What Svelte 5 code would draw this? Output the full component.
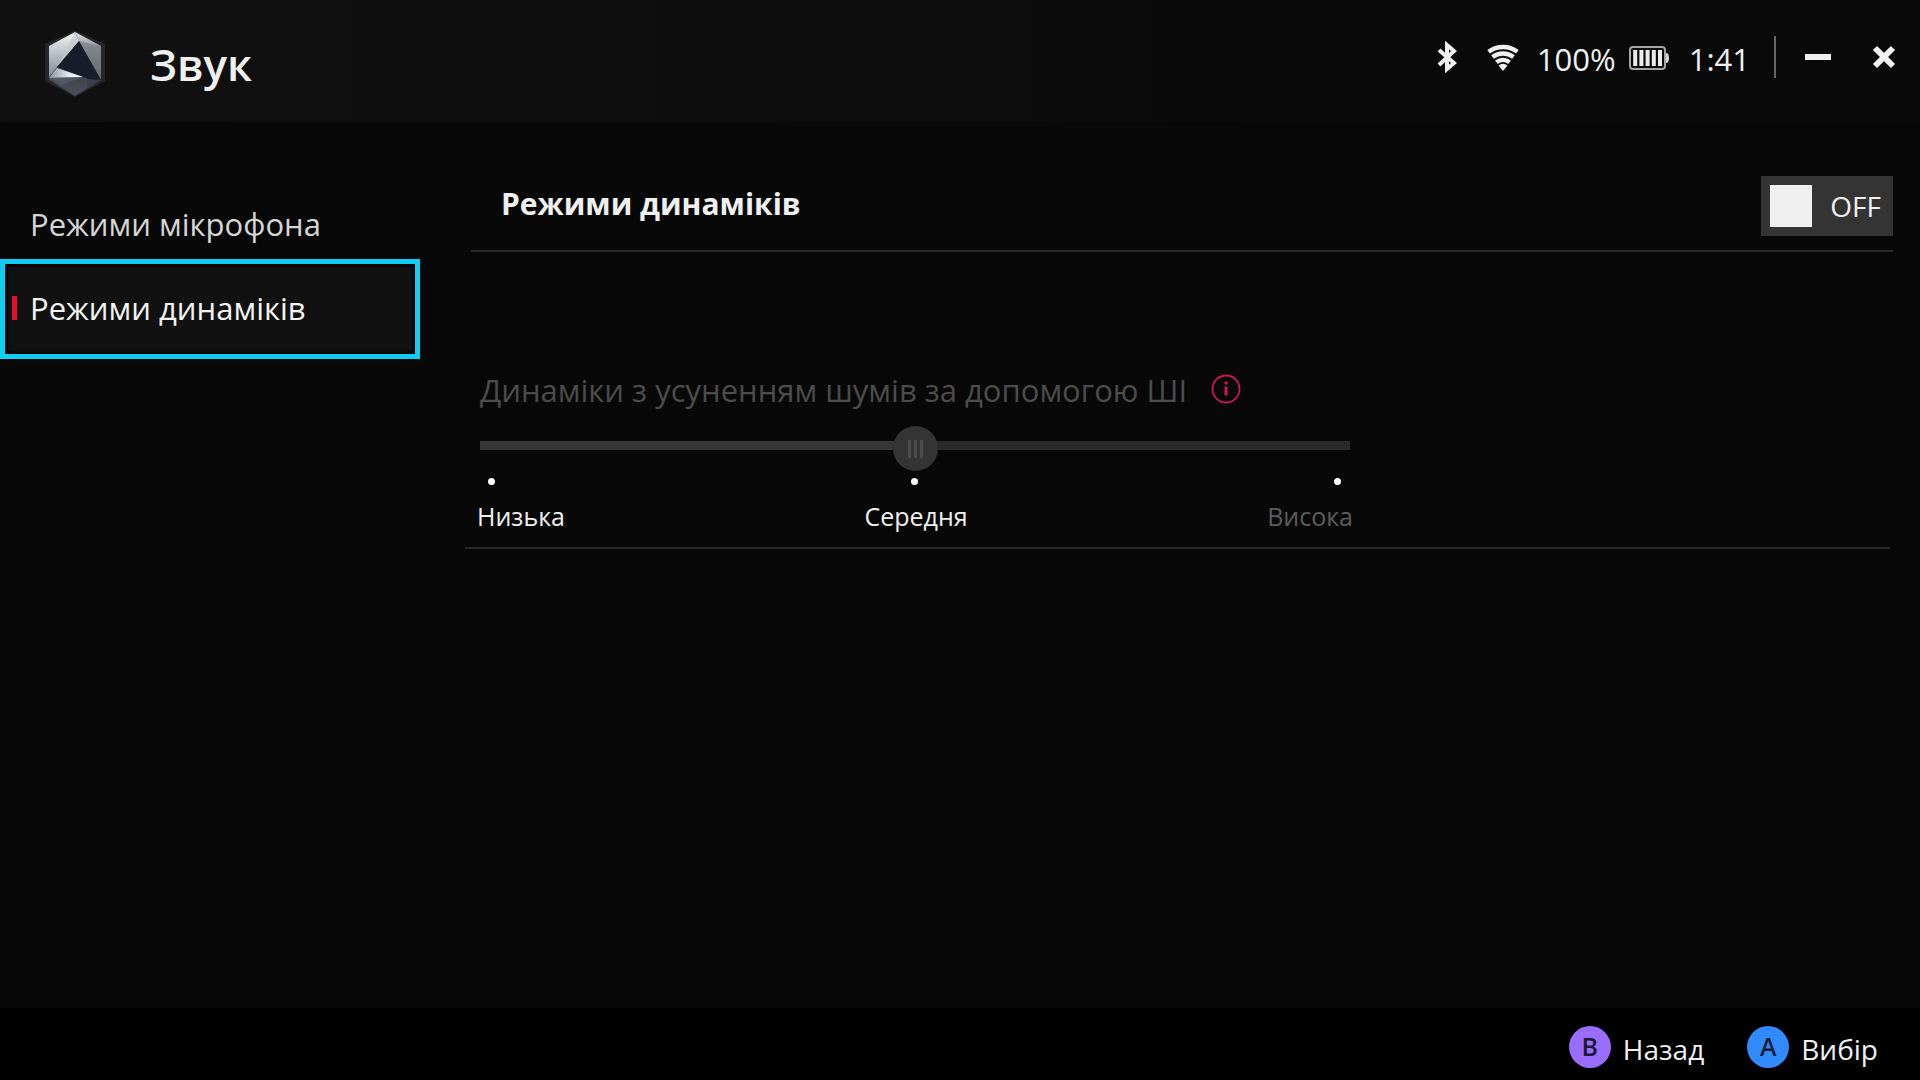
<script>
	let tabs = [
		{ id: 'mic', label: 'Режими мікрофона' },
		{ id: 'speaker', label: 'Режими динаміків' }
	];
	let levels = ['Низька', 'Середня', 'Висока'];

	let active = 'speaker';
	let enabled = false;
	let level = 1;
</script>

<div class="app">
	<header class="topbar">
		<svg class="logo" viewBox="0 0 64 68" aria-hidden="true">
			<defs>
				<linearGradient id="lg-left" x1="0" y1="0" x2="0" y2="1">
					<stop offset="0" stop-color="#f2f5f8" />
					<stop offset="0.5" stop-color="#b9bec6" />
					<stop offset="1" stop-color="#868b94" />
				</linearGradient>
				<linearGradient id="lg-right" x1="0" y1="0" x2="0" y2="1">
					<stop offset="0" stop-color="#e2e6ea" />
					<stop offset="0.3" stop-color="#9599a0" />
					<stop offset="1" stop-color="#5a5d64" />
				</linearGradient>
				<linearGradient id="lg-fold" x1="0" y1="0" x2="1" y2="0">
					<stop offset="0" stop-color="#8d929b" />
					<stop offset="0.6" stop-color="#e8ebef" />
					<stop offset="1" stop-color="#fff" />
				</linearGradient>
				<linearGradient id="lg-base" x1="0" y1="0" x2="0" y2="1">
					<stop offset="0" stop-color="#262c38" />
					<stop offset="1" stop-color="#4a4f59" />
				</linearGradient>
			</defs>
			<path d="M32 0 62 13V50L32 66 2 50V13Z" fill="#24262b" />
			<path d="M32 1 58 15V49L32 65 6 49V15Z" fill="url(#lg-base)" />
			<path d="M32 1 6 15V46L14 36 36 10Z" fill="url(#lg-left)" />
			<path d="M32 1 14 36 36 10Z" fill="#c3c7cd" opacity="0.6" />
			<path d="M32 1 58 15V49L36 10Z" fill="url(#lg-right)" />
			<path d="M36 10 58 15V49Z" fill="#6f737b" opacity="0.5" />
			<path d="M36 10 14 36 40 46 44 47V58L58 49Z" fill="#191d29" />
			<path d="M14 37 40 46 6 47Z" fill="url(#lg-fold)" />
			<path d="M6 47 40 46 18 54Z" fill="#5a606b" opacity="0.7" />
			<path d="M44 48 58 49 44 58Z" fill="#3c414b" />
		</svg>
		<h1>Звук</h1>

		<div class="status">
			<svg class="bluetooth" viewBox="0 0 20 32" aria-label="Bluetooth">
				<path d="M2 9 17 22 10 28V4L17 10 2 24" />
			</svg>
			<svg class="wifi" viewBox="0 0 32 27" aria-label="Wi-Fi">
				<path d="M1.6 7.8A24 24 0 0 1 30.4 7.8" />
				<path d="M5.5 13A17.5 17.5 0 0 1 26.5 13" />
				<path d="M9.4 18.2A11 11 0 0 1 22.6 18.2" />
				<path class="fill" d="M16 27 11.5 21.5A7 7 0 0 1 20.5 21.5Z" />
			</svg>
			<span class="percent">100%</span>
			<svg class="battery" viewBox="0 0 40 24" aria-hidden="true">
				<rect x="1" y="1" width="35" height="22" rx="3" fill="none" stroke="#a5a5a5" stroke-width="2" />
				<path d="M37 7Q40 7 40 12T37 17Z" fill="#d8d8d8" />
				<path d="M6.2 4V20M12.4 4V20M18.6 4V20M24.8 4V20M31 4V20" stroke="#ececec" stroke-width="4" />
			</svg>
			<span class="clock">1:41</span>
		</div>

		<div class="window-actions">
			<button type="button" aria-label="Згорнути">
				<svg viewBox="0 0 26 26"><path d="M0 13H26" /></svg>
			</button>
			<button type="button" aria-label="Закрити">
				<svg viewBox="0 0 26 26"><path d="M4 4 22 22M22 4 4 22" /></svg>
			</button>
		</div>
	</header>

	<div class="body">
		<nav>
			{#each tabs as tab (tab.id)}
				<button
					type="button"
					class="tab"
					class:active={active === tab.id}
					on:click={() => (active = tab.id)}
				>
					<span class="marker"></span>
					{tab.label}
				</button>
			{/each}
		</nav>

		<main>
			<div class="section-head">
				<h2>Режими динаміків</h2>
				<label class="toggle" class:on={enabled}>
					<input type="checkbox" bind:checked={enabled} aria-label="Режими динаміків" />
					<span>{enabled ? 'ON' : 'OFF'}</span>
				</label>
			</div>

			<section class="setting">
				<div class="setting-title">
					<label for="noise-level">Динаміки з усуненням шумів за допомогою ШІ</label>
					<svg viewBox="0 0 30 30" aria-hidden="true">
						<circle cx="15" cy="15" r="13.5" fill="none" stroke="#c8194f" stroke-width="1.8" />
						<circle cx="15" cy="9" r="1.7" fill="#c8194f" />
						<path d="M15 12.5V21.5" stroke="#c8194f" stroke-width="3" />
					</svg>
				</div>
				<div class="slider">
					<input id="noise-level" type="range" min="0" max="2" bind:value={level} disabled={!enabled} />
					<div class="dots">
						{#each levels as name (name)}
							<i></i>
						{/each}
					</div>
					<div class="levels">
						{#each levels as name, i (name)}
							<span class:dim={i > level}>{name}</span>
						{/each}
					</div>
				</div>
			</section>
		</main>
	</div>

	<footer>
		<button type="button" class="hint">
			<span class="key key-b">B</span>
			<span class="text">Назад</span>
		</button>
		<button type="button" class="hint">
			<span class="key key-a">A</span>
			<span class="text">Вибір</span>
		</button>
	</footer>
</div>

<style>
	:global(body) {
		background: #080808;
	}

	.app {
		display: flex;
		flex-direction: column;
		min-height: 100vh;
		background: #080808;
		color: #f0f0f0;
		font-family: 'Open Sans', 'Noto Sans', sans-serif;
		font-size: 31px;
		line-height: 44px;
	}

	button {
		padding: 0;
		border: none;
		background: none;
		color: inherit;
		font: inherit;
		cursor: pointer;
	}

	.topbar {
		display: flex;
		align-items: center;
		height: 122px;
		padding: 0 23px 0 43px;
		box-sizing: border-box;
		background: linear-gradient(90deg, #111 0%, #0f0f0f 25%, #090909 70%);
	}

	.logo {
		width: 64px;
		height: 68px;
		margin-top: 8px;
	}

	h1 {
		flex: 1;
		margin: 6px 0 0 43px;
		font-size: 44px;
		font-weight: 600;
		line-height: 60px;
	}

	.status {
		display: flex;
		align-items: center;
		padding: 0 24px 8px 0;
	}

	.status span {
		padding-top: 3px;
	}

	.bluetooth {
		width: 20px;
		height: 32px;
		margin-right: 30px;
		fill: none;
		stroke: #f0f0f0;
		stroke-width: 4;
	}

	.wifi {
		width: 32px;
		height: 27px;
		margin-right: 18px;
		fill: none;
		stroke: #f0f0f0;
		stroke-width: 4.5;
	}

	.wifi .fill {
		fill: #f0f0f0;
		stroke: none;
	}

	.battery {
		width: 40px;
		height: 24px;
		margin: 2px 20px 0 13px;
	}

	.window-actions {
		display: flex;
		align-items: center;
		gap: 40px;
		height: 42px;
		margin-bottom: 8px;
		padding-left: 29px;
		border-left: 2px solid #666;
	}

	.window-actions button {
		display: flex;
	}

	.window-actions svg {
		width: 26px;
		height: 26px;
		stroke: #f0f0f0;
		stroke-width: 6;
	}

	.body {
		display: flex;
		flex: 1;
	}

	nav {
		display: flex;
		flex-direction: column;
		width: 420px;
		flex-shrink: 0;
		padding-top: 68px;
	}

	.tab {
		display: flex;
		align-items: center;
		gap: 13px;
		height: 69px;
		padding: 0 12px 2px;
		color: #d6d6d6;
		text-align: left;
	}

	.tab.active {
		height: 100px;
		padding: 0 7px 2px;
		border: 5px solid #12cdf2;
		background: #111;
		box-shadow: inset 0 0 3px 2px #000;
		color: #f4f4f4;
	}

	.marker {
		width: 5px;
		height: 24px;
	}

	.active .marker {
		background: #e3122c;
	}

	main {
		flex: 1;
		padding: 54px 27px 0 45px;
	}

	.section-head {
		display: flex;
		align-items: flex-start;
		justify-content: space-between;
		height: 74px;
		margin-left: 6px;
		padding-left: 30px;
		border-bottom: 2px solid #292929;
	}

	h2 {
		margin: 6px 0 0;
		font-size: 30px;
		font-weight: 700;
		line-height: 44px;
	}

	.toggle {
		display: flex;
		align-items: center;
		justify-content: space-between;
		width: 132px;
		height: 60px;
		padding: 0 12px 0 9px;
		box-sizing: border-box;
		background: #343434;
		font-size: 28px;
		cursor: pointer;
	}

	.toggle input {
		appearance: none;
		width: 42px;
		height: 42px;
		margin: 0;
		background: #f0f0f0;
	}

	.toggle.on {
		flex-direction: row-reverse;
		background: #c8102e;
	}

	.setting {
		margin-right: 3px;
		padding: 116px 0 9px 15px;
		border-bottom: 2px solid #292929;
	}

	.setting-title {
		display: flex;
		align-items: center;
		gap: 24px;
		color: #4c4c4c;
	}

	.setting-title svg {
		width: 30px;
		height: 30px;
		margin-bottom: 3px;
	}

	.slider {
		width: 870px;
		max-width: 100%;
		padding-top: 14px;
	}

	.slider input {
		display: block;
		appearance: none;
		width: 100%;
		height: 45px;
		margin: 0;
		background: linear-gradient(90deg, #363636 50%, #2a2a2a 50%) 0 15px / 100% 9px no-repeat;
	}

	.slider input::-webkit-slider-thumb {
		appearance: none;
		width: 45px;
		height: 45px;
		border-radius: 50%;
		background:
			linear-gradient(
					90deg,
					#4c4c4c 3px,
					transparent 3px 6px,
					#4c4c4c 6px 9px,
					transparent 9px 12px,
					#4c4c4c 12px
				)
				center / 15px 18px no-repeat,
			#343434;
	}

	.dots {
		display: flex;
		justify-content: space-between;
		padding: 7px 9px 0 8px;
	}

	.dots i {
		width: 7px;
		height: 7px;
		border-radius: 50%;
		background: #fff;
	}

	.levels {
		display: flex;
		justify-content: space-between;
		margin: 9px -3px 0;
		font-size: 25px;
	}

	.levels .dim {
		color: #5c5c5c;
	}

	footer {
		display: flex;
		align-items: center;
		justify-content: flex-end;
		gap: 43px;
		height: 72px;
		padding: 0 42px;
		background: #000;
	}

	.hint {
		display: flex;
		align-items: center;
		gap: 12px;
		padding-top: 6px;
		font-size: 28px;
	}

	.hint .text {
		padding-top: 3px;
	}

	.key {
		width: 42px;
		height: 42px;
		border-radius: 50%;
		color: #161c33;
		font-size: 25px;
		font-weight: 600;
		line-height: 40px;
		text-align: center;
	}

	.key-b {
		background: #9b6dff;
	}

	.key-a {
		background: #318bff;
	}
</style>
